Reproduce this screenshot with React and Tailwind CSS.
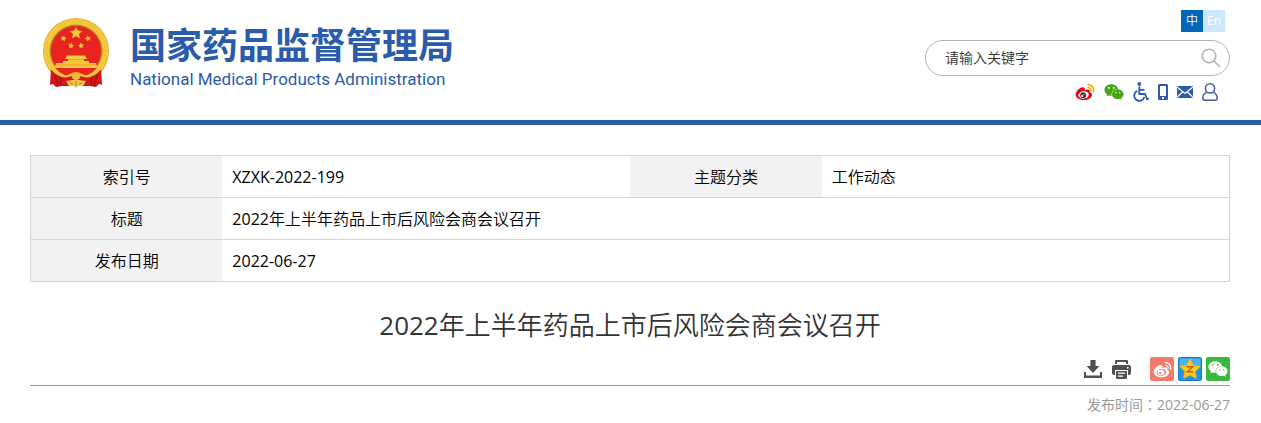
import { FaWeixin } from 'react-icons/fa';

const STAR = 'M0 -10 L2.9 -3.9 L9.5 -3.1 L4.7 1.5 L5.9 8.1 L0 4.9 L-5.9 8.1 L-4.7 1.5 L-9.5 -3.1 L-2.9 -3.9 Z';

function Emblem() {
    return (
        <svg viewBox="0 0 68 72" className="h-[72px] w-[68px] shrink-0" aria-hidden="true">
            <circle cx="34" cy="34" r="33" fill="#dfa52a" />
            <circle cx="34" cy="34" r="29.5" fill="none" stroke="#f3c93f" strokeWidth="5.5" />
            <circle cx="34" cy="34" r="29.5" fill="none" stroke="#e2ac2b" strokeWidth="1" strokeDasharray="1 3" />
            <circle cx="34" cy="34" r="25.5" fill="#e8241f" stroke="#b9781c" strokeWidth="1" />
            <g fill="#f5c63a">
                <path d={STAR} transform="translate(34 16) scale(.65)" />
                <path d={STAR} transform="translate(21.5 21.5) rotate(15) scale(.32)" />
                <path d={STAR} transform="translate(46 21.5) rotate(-15) scale(.32)" />
                <path d={STAR} transform="translate(29 28.7) rotate(10) scale(.32)" />
                <path d={STAR} transform="translate(39 28.7) rotate(-10) scale(.32)" />
            </g>
            <path d="M25 38.5 H43 L45 42 H42 V46 H26 V42 H23Z" fill="#f8ca40" />
            <path d="M21 44 H47 V46 H54 L55 51 H13 L14 46 H21Z" fill="#f7c43b" />
            <path d="M26 42.5 H42 M14 48 H54" stroke="#dc8c25" strokeWidth=".6" />
            <path d="M13 51 H55 Q47 60 34 60 Q21 60 13 51Z" fill="#e8241f" />
            <path d="M9 51 Q18 60 26 58 H42 Q50 60 59 51 L60 68 L57 67 L54 70 L48 69 H20 L14 70 L11 67 L8 68Z" fill="#d4161b" />
            <path d="M13 58 L16 69 M18 60 L19 69 M55 58 L52 69 M50 60 L49 69" stroke="#960f15" strokeWidth="1" />
            <path d="M9 51 Q18 61 26 59 Q31 56 34 61 Q37 56 42 59 Q50 61 59 51" fill="none" stroke="#f4c744" strokeWidth="2.2" />
            <path d="M28 57 Q34 53 40 57 L37 62 H31Z" fill="#f2b936" />
            <path d="M24 64 L31 63 Q34 61 37 63 L44 64 L41 69 L36 69 L34 71 L32 69 L27 69Z" fill="#f4c744" />
            <path d="M28 66 L31 67 M34 64 V69 M40 66 L37 67" stroke="#b9781c" strokeWidth="1" />
        </svg>
    );
}

function Weibo({ className }) {
    return (
        <svg viewBox="0 0 20 18" className={className} aria-hidden="true">
            <path
                d="M8.2 4.2 C5.5 3.5 .6 8 .6 11.6 C.6 15 4.6 17.2 8.6 17.2 C13.6 17.2 17 14.4 17 11.8 C17 10.2 15.8 9.4 14.6 9 C15.4 7 14 5.6 9.6 7.2 C10.2 5.4 9.8 4.6 8.2 4.2Z"
                fill="#e60012"
            />
            <ellipse cx="8.6" cy="12" rx="5.3" ry="3.7" transform="rotate(-8 8.6 12)" fill="#fff" />
            <circle cx="8.2" cy="12.2" r="3" fill="#3a3a3a" />
            <circle cx="7.2" cy="13" r="1" fill="#fff" />
            <circle cx="9" cy="11.6" r=".5" fill="#fff" />
            <path d="M13 1.6 A5.8 5.8 0 0 1 18.6 8.6" fill="none" stroke="#f0a800" strokeWidth="1.7" strokeLinecap="round" />
            <path d="M13.2 4.5 A2.8 2.8 0 0 1 15.8 7.8" fill="none" stroke="#f0a800" strokeWidth="1.4" strokeLinecap="round" />
        </svg>
    );
}

// share button variant, cut out of a solid tile
function WeiboMono({ className }) {
    return (
        <svg viewBox="0 0 20 18" className={className} aria-hidden="true">
            <path
                d="M8.2 4.2 C5.5 3.5 .6 8 .6 11.6 C.6 15 4.6 17.2 8.6 17.2 C13.6 17.2 17 14.4 17 11.8 C17 10.2 15.8 9.4 14.6 9 C15.4 7 14 5.6 9.6 7.2 C10.2 5.4 9.8 4.6 8.2 4.2Z"
                fill="#fff"
            />
            <ellipse cx="8.8" cy="12" rx="5.2" ry="3.6" transform="rotate(-8 8.8 12)" fill="#f67a6a" />
            <ellipse cx="8.4" cy="12.2" rx="3.6" ry="2.9" fill="#fff" />
            <circle cx="7.6" cy="12.8" r="1.2" fill="#f67a6a" />
            <path d="M13 1.6 A5.8 5.8 0 0 1 18.6 8.6" fill="none" stroke="#fff" strokeWidth="1.6" strokeLinecap="round" />
            <path d="M13.2 4.5 A2.8 2.8 0 0 1 15.8 7.8" fill="none" stroke="#fff" strokeWidth="1.3" strokeLinecap="round" />
        </svg>
    );
}

function WheelchairIcon() {
    return (
        <svg viewBox="0 0 16 20" className="h-5 w-4" fill="none" stroke="#2b5bab" strokeWidth="1.8" aria-hidden="true">
            <circle cx="6.3" cy="2" r="1.9" fill="#2b5bab" stroke="none" />
            <path d="M6.3 4.5 V12 H12 L14.2 17.4 L16 16.6" />
            <path d="M6.3 7.8 H11.5" />
            <path d="M4.4 8.8 A5.2 5.2 0 1 0 11.4 15" />
        </svg>
    );
}

function PhoneIcon() {
    return (
        <svg viewBox="0 0 10 16" className="h-4 w-[10px]" aria-hidden="true">
            <path fillRule="evenodd" d="M1.5 0 H8.5 Q10 0 10 1.5 V14.5 Q10 16 8.5 16 H1.5 Q0 16 0 14.5 V1.5 Q0 0 1.5 0Z M2 2 V12 H8 V2Z M4 13 V15 H6 V13Z" fill="#2b5bab" />
        </svg>
    );
}

function MailIcon() {
    return (
        <svg viewBox="0 0 16 12" className="h-3 w-4" aria-hidden="true">
            <rect width="16" height="12" fill="#2b5bab" />
            <path d="M0 1 L8 7.5 L16 1 M0 11.3 L5.5 6 M16 11.3 L10.5 6" fill="none" stroke="#fff" strokeWidth="1.2" />
        </svg>
    );
}

function UserIcon() {
    return (
        <svg viewBox="0 0 16 18" className="h-[18px] w-4" fill="none" stroke="#3a5dab" strokeWidth="1.5" aria-hidden="true">
            <circle cx="8" cy="5.4" r="4.6" />
            <path d="M4.8 9.4 Q.8 11 .8 15 Q.8 17.2 3 17.2 H13 Q15.2 17.2 15.2 15 Q15.2 11 11.2 9.4" />
        </svg>
    );
}

function DownloadIcon() {
    return (
        <svg viewBox="0 0 18 18" className="h-[18px] w-[18px]" fill="#505050" aria-hidden="true">
            <path d="M6.4 0 H11.6 V6 H15.4 L9 13 L2.6 6 H6.4Z" />
            <path d="M0 12 H2 V15.6 H16 V12 H18 V18 H0Z" />
        </svg>
    );
}

function PrintIcon() {
    return (
        <svg viewBox="0 0 19 19" className="h-[19px] w-[19px]" fill="#505050" aria-hidden="true">
            <path d="M4 0 H15 Q16 0 16 1 V4 H14 V2 H5 V4 H3 V1 Q3 0 4 0Z" />
            <path fillRule="evenodd" d="M2 5 H17 Q19 5 19 7 V13 Q19 15 17 15 H16 V10 H3 V15 H2 Q0 15 0 13 V7 Q0 5 2 5Z M15 7 V8.5 H16.6 V7Z" />
            <path fillRule="evenodd" d="M4 11 H15 V17.5 Q15 19 13.5 19 H5.5 Q4 19 4 17.5Z M6 12.4 V13.8 H13 V12.4Z M6 15.4 V16.8 H11 V15.4Z" />
        </svg>
    );
}

function QzoneIcon() {
    return (
        <svg viewBox="0 0 24 24" className="h-6 w-6" aria-hidden="true">
            <rect x=".5" y=".5" width="23" height="23" rx="1.5" fill="#1d96e6" stroke="#1a78cc" />
            <path d="M1.5 1.5 H22.5 V10 Q12 14 1.5 10Z" fill="#4db4f2" />
            <path d={STAR} transform="translate(12 12.6)" fill="#ffca1f" stroke="#ffbc10" strokeWidth="1.6" strokeLinejoin="round" />
            <path d="M8.6 9.8 H14.8 L9.4 14.8 H15" fill="none" stroke="#b5651a" strokeWidth="1.4" />
        </svg>
    );
}

const tools = [
    { label: '微博', icon: <Weibo className="h-[18px] w-5" /> },
    { label: '微信', icon: <FaWeixin className="h-5 w-5 text-[#46a616]" /> },
    { label: '无障碍', icon: <WheelchairIcon /> },
    { label: '手机版', icon: <PhoneIcon /> },
    { label: '邮箱', icon: <MailIcon /> },
    { label: '个人中心', icon: <UserIcon /> },
];

function Header() {
    return (
        <header className="border-b-[5px] border-[#2b5bab]">
            <div className="mr-[31px] ml-[30px] flex h-[120px] justify-between">
                <a href="#" className="flex gap-5 pt-[17px] pl-3 text-[#2b5bab]">
                    <Emblem />
                    <span className="block pt-2">
                        <span className="block font-['Open_Sans','Noto_Sans_CJK_SC',sans-serif] text-4xl leading-[42px] font-bold">国家药品监督管理局</span>
                        <span className="block font-['Roboto'] text-[17px] leading-6">National Medical Products Administration</span>
                    </span>
                </a>

                <div className="flex flex-col items-end pt-[10px]">
                    <div className="mr-[5px] flex text-center text-xs leading-[22px] text-white">
                        <a href="#" className="w-[22px] bg-[#0068b7]">中</a>
                        <a href="#" className="w-[22px] bg-[#cce8ff]">En</a>
                    </div>
                    <form className="mt-2 flex h-9 w-[305px] items-center rounded-full border border-[#b3b3b3] pr-2 pl-[19px]">
                        <input
                            type="text"
                            aria-label="请输入关键字"
                            placeholder="请输入关键字"
                            className="min-w-0 flex-1 text-sm text-[#333] outline-none placeholder:text-[#333]"
                        />
                        <button type="button" aria-label="搜索">
                            <svg viewBox="0 0 20 20" className="h-5 w-5" fill="none" stroke="#b3b3b3" strokeWidth="1.6" aria-hidden="true">
                                <circle cx="8" cy="8" r="6.8" />
                                <path d="M13 13 L19 19" />
                            </svg>
                        </button>
                    </form>
                    <div className="mt-[6px] mr-3 flex h-5 items-center gap-[9px]">
                        {tools.map((tool) => (
                            <a key={tool.label} href="#" aria-label={tool.label} className="flex">
                                {tool.icon}
                            </a>
                        ))}
                    </div>
                </div>
            </div>
        </header>
    );
}

function InfoTable() {
    const th = 'h-[42px] bg-[#f2f2f2] font-normal';
    const td = 'h-[42px] px-[10px]';

    return (
        <table className="w-full table-fixed border-collapse border border-[#d5d5d5] text-base leading-6 text-black">
            <colgroup>
                <col className="w-[16%]" />
                <col className="w-[34%]" />
                <col className="w-[16%]" />
                <col className="w-[34%]" />
            </colgroup>
            <tbody>
                <tr className="border-b border-[#d5d5d5]">
                    <th scope="row" className={th}>索引号</th>
                    <td className={td}>XZXK-2022-199</td>
                    <th scope="row" className={th}>主题分类</th>
                    <td className={td}>工作动态</td>
                </tr>
                <tr className="border-b border-[#d5d5d5]">
                    <th scope="row" className={th}>标题</th>
                    <td className={td} colSpan={3}>2022年上半年药品上市后风险会商会议召开</td>
                </tr>
                <tr>
                    <th scope="row" className={th}>发布日期</th>
                    <td className={td} colSpan={3}>2022-06-27</td>
                </tr>
            </tbody>
        </table>
    );
}

function ShareBar() {
    return (
        <div className="flex items-center justify-end border-b border-[#999] pb-1">
            <button type="button" aria-label="下载" className="mr-[10px]">
                <DownloadIcon />
            </button>
            <button type="button" aria-label="打印" className="mr-[19px]">
                <PrintIcon />
            </button>
            <div className="flex gap-1">
                <a href="#" aria-label="分享到微博" className="flex h-6 w-6 items-center justify-center rounded-xs bg-[#f67a6a]">
                    <WeiboMono className="h-[17px] w-[19px]" />
                </a>
                <a href="#" aria-label="分享到QQ空间">
                    <QzoneIcon />
                </a>
                <a href="#" aria-label="分享到微信" className="flex h-6 w-6 items-center justify-center rounded-xs bg-[#3bb83f]">
                    <FaWeixin className="h-5 w-5 text-white" />
                </a>
            </div>
        </div>
    );
}

export default function App() {
    return (
        <div className="min-h-screen bg-white font-['Open_Sans','Noto_Sans_CJK_SC_DemiLight','Noto_Sans_CJK_SC',sans-serif]">
            <Header />
            <main className="mr-[31px] ml-[30px] pt-[30px]">
                <InfoTable />
                <h1 className="pt-[23px] text-center text-[26px] leading-10 text-[#333]">2022年上半年药品上市后风险会商会议召开</h1>
                <div className="pt-3">
                    <ShareBar />
                </div>
                <p className="pt-[9px] text-right font-['Open_Sans','Noto_Sans_CJK_TC',sans-serif] text-sm leading-5 text-[#999]">发布时间：2022-06-27</p>
            </main>
        </div>
    );
}
